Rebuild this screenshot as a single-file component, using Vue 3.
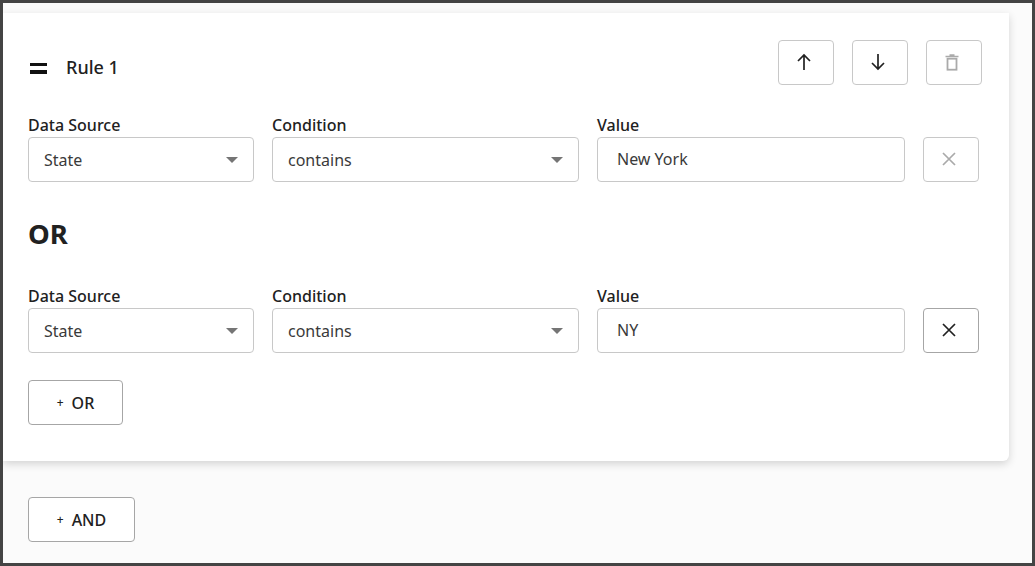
<script setup>
const groups = [
  { value: 'New York', disabled: true },
  { value: 'NY', disabled: false },
]
</script>

<template>
  <div class="frame">
    <section class="card">
      <header class="head">
        <div class="title">
          <span class="grip"><i></i><i></i></span>
          <span class="rule-name">Rule 1</span>
        </div>
        <div class="tools">
          <button class="btn icon soft">
            <svg width="24" height="24" viewBox="0 0 24 24"><path d="M12 20V5M6 11l6-6 6 6" fill="none" stroke="#212121" stroke-width="1.7"/></svg>
          </button>
          <button class="btn icon soft">
            <svg width="24" height="24" viewBox="0 0 24 24"><path d="M12 4v15M6 13l6 6 6-6" fill="none" stroke="#212121" stroke-width="1.7"/></svg>
          </button>
          <button class="btn icon soft">
            <svg width="24" height="24" viewBox="0 0 24 24"><path d="M5.5 6.5h13M9.5 5h5" fill="none" stroke="#aaa" stroke-width="1.5"/><rect x="7.5" y="8.7" width="9" height="11" fill="none" stroke="#aaa" stroke-width="1.8"/></svg>
          </button>
        </div>
      </header>

      <template v-for="(g, i) in groups" :key="g.value">
        <h2 v-if="i > 0" class="or">OR</h2>
        <div class="row">
          <label class="field source">
            <span class="label">Data Source</span>
            <span class="control select">State<b class="caret"></b></span>
          </label>
          <label class="field cond">
            <span class="label">Condition</span>
            <span class="control select">contains<b class="caret"></b></span>
          </label>
          <label class="field val">
            <span class="label">Value</span>
            <span class="control input">{{ g.value }}</span>
          </label>
          <button class="btn icon remove" :class="g.disabled ? 'soft' : 'strong'">
            <svg width="24" height="24" viewBox="0 0 24 24"><path d="M6 6l12 12M18 6L6 18" fill="none" :stroke="g.disabled ? '#aaa' : '#212121'" stroke-width="1.7"/></svg>
          </button>
        </div>
      </template>

      <button class="btn add add-or"><span class="plus">+</span>OR</button>
    </section>

    <button class="btn add add-and"><span class="plus">+</span>AND</button>
  </div>
</template>

<style scoped>
.frame {
  box-sizing: border-box;
  width: 1035px;
  height: 566px;
  border: 3px solid #444;
  background: #fbfbfb;
  padding-top: 10px;
  overflow: hidden;
  font-family: "Noto Sans", "Open Sans", sans-serif;
  color: #212121;
}
.card {
  box-sizing: border-box;
  width: 1006px;
  height: 448px;
  background: #fff;
  border-radius: 0 0 6px 0;
  box-shadow: 0 3px 8px rgba(0, 0, 0, 0.16);
  padding: 27px 27px 0 25px;
}
.head {
  display: flex;
  justify-content: space-between;
  align-items: center;
  height: 45px;
}
.title {
  display: flex;
  align-items: center;
  gap: 19px;
  margin-top: 9px;
}
.grip {
  display: flex;
  flex-direction: column;
  gap: 4px;
  width: 17px;
  margin: 2px 0 0 2px;
}
.grip i {
  display: block;
  height: 3.5px;
  background: #111;
}
.rule-name {
  font-size: 18px;
  font-weight: 500;
}
.tools {
  display: flex;
  gap: 18px;
}
.btn {
  box-sizing: border-box;
  height: 45px;
  background: #fff;
  border: 1px solid #a6a6a6;
  border-radius: 4px;
  padding: 0;
  font-family: inherit;
  color: #212121;
}
.icon {
  width: 56px;
  display: flex;
  align-items: center;
  justify-content: center;
}
.icon svg {
  margin: -1px 5px 0 0;
}
.soft {
  border-color: #c8c8c8;
}
.row {
  display: flex;
  align-items: flex-end;
  gap: 18px;
  margin-top: 30px;
}
.field {
  display: flex;
  flex-direction: column;
}
.source { width: 226px; }
.cond { width: 307px; }
.val { width: 308px; }
.label {
  font-size: 16px;
  font-weight: 500;
  line-height: 20px;
  padding-bottom: 2px;
}
.control {
  box-sizing: border-box;
  position: relative;
  height: 45px;
  border: 1px solid #c8c8c8;
  border-radius: 4px;
  display: flex;
  align-items: center;
  font-size: 16px;
  color: #3a3a3a;
  padding-left: 15px;
}
.input {
  padding-left: 19px;
  padding-bottom: 2px;
}
.caret {
  position: absolute;
  right: 15px;
  top: 19px;
  width: 0;
  height: 0;
  border-left: 6px solid transparent;
  border-right: 6px solid transparent;
  border-top: 6px solid #757575;
}
.strong {
  border-color: #a6a6a6;
}
.or {
  margin: 36px 0 0;
  font-size: 27.5px;
  line-height: 32px;
  font-weight: 700;
  color: #212121;
  height: 38px;
}
.add {
  display: flex;
  align-items: center;
  justify-content: center;
  font-size: 16px;
  font-weight: 500;
}
.plus {
  font-size: 12px;
  margin-right: 8px;
}
.add-or {
  width: 95px;
  margin-top: 27px;
}
.add-and {
  width: 107px;
  margin: 36px 0 0 25px;
}
</style>
